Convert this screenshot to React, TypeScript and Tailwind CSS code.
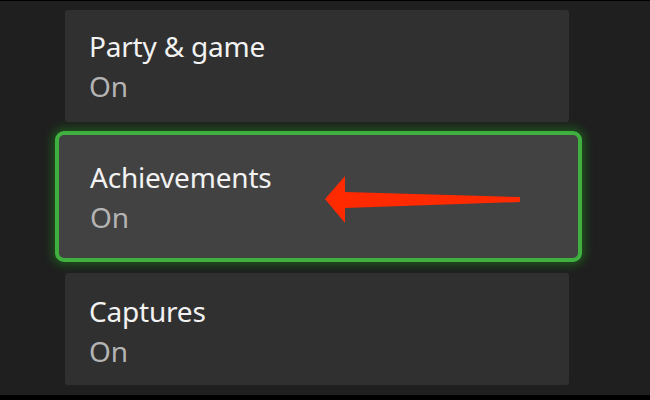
const font = { fontFamily: '"Noto Sans", "Open Sans", sans-serif' };

function Setting({ title, value }: { title: string; value: string }) {
    return (
        <div className="flex flex-col">
            <span className="text-[28px] leading-[40px] tracking-[-0.2px] text-[#f2f2f2]">{title}</span>
            <span className="text-[28px] leading-[40px] text-[#b4b4b4]">{value}</span>
        </div>
    );
}

// red annotation arrow, drawn over the focused card
function Arrow() {
    return (
        <svg
            width="205"
            height="52"
            viewBox="320 174 205 52"
            className="absolute left-[261px] top-[39px]"
        >
            <polygon
                points="325,199 345,176 345,192 520,197 520,202 345,208 345,223"
                fill="#ff2a00"
            />
        </svg>
    );
}

export default function App() {
    return (
        <div
            className="w-[650px] h-[400px] bg-[#1f1f1f] border-t border-black flex flex-col overflow-hidden"
            style={font}
        >
            <div className="ml-[65px] mt-[9px] w-[504px] h-[112px] bg-[#303030] rounded-[3px] pl-[24px] pt-[16px]">
                <Setting title="Party & game" value="On" />
            </div>

            <div className="relative ml-[55px] mt-[9px] w-[527px] h-[131px] rounded-[9px] border-[4px] border-[#3fb03f] bg-[#424242] shadow-[0_0_10px_3px_rgba(30,130,30,0.55)] pl-[31px] pt-[22px]">
                <Setting title="Achievements" value="On" />
                <Arrow />
            </div>

            <div className="ml-[65px] mt-[11px] w-[504px] h-[112px] bg-[#303030] rounded-[3px] pl-[24px] pt-[18px]">
                <Setting title="Captures" value="On" />
            </div>

            <div className="mt-auto h-[5px] bg-black" />
        </div>
    );
}
